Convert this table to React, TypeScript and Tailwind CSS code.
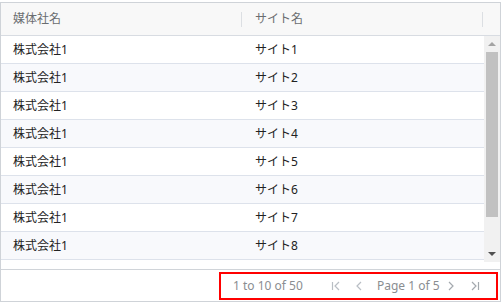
const rows = Array.from({ length: 10 }, (_, i) => ({
  company: '株式会社1',
  site: `サイト${i + 1}`,
}))

const font = "font-['Noto_Sans','Noto_Sans_CJK_JP',sans-serif]"

function PageIcon({ kind, muted }: { kind: 'first' | 'prev' | 'next' | 'last'; muted?: boolean }) {
  const stroke = muted ? '#b9bec4' : '#a4a9ae'
  return (
    <svg width="16" height="16" viewBox="0 0 16 16" fill="none" stroke={stroke} strokeWidth="1.2">
      {kind === 'first' && (
        <>
          <path d="M4.5 4v8" />
          <path d="M11 4l-4 4 4 4" />
        </>
      )}
      {kind === 'prev' && <path d="M10 4l-4 4 4 4" />}
      {kind === 'next' && <path d="M6 4l4 4-4 4" />}
      {kind === 'last' && (
        <>
          <path d="M5 4l4 4-4 4" />
          <path d="M11.5 4v8" />
        </>
      )}
    </svg>
  )
}

function Scrollbar() {
  return (
    <div className="flex w-[16px] flex-col bg-[#f1f1f1]">
      <div className="flex h-[16px] items-center justify-center">
        <div className="h-0 w-0 border-x-[4px] border-b-[4px] border-x-transparent border-b-[#a3a3a3]" />
      </div>
      <div className="mx-[2px] h-[165px] bg-[#c1c1c1]" />
      <div className="flex-1" />
      <div className="flex h-[16px] items-center justify-center">
        <div className="h-0 w-0 border-x-[4px] border-t-[4px] border-x-transparent border-t-[#505050]" />
      </div>
    </div>
  )
}

export default function App() {
  return (
    <div className={`bg-white pt-[2px] ${font}`}>
      <div className="flex h-[300px] w-[501px] flex-col border border-[#cfd3d8] bg-white">
        <div className="flex h-[33px] shrink-0 border-b border-[#d8dce2] bg-[#f8f8f8] text-[12px] text-[#6a6d70]">
          <div className="flex w-[241px] items-center">
            <span className="flex-1 pl-[12px]">媒体社名</span>
            <div className="h-[15px] w-px bg-[#dcdfe3]" />
          </div>
          <div className="flex w-[241px] items-center">
            <span className="flex-1 pl-[13px]">サイト名</span>
            <div className="h-[15px] w-px bg-[#dcdfe3]" />
          </div>
        </div>

        <div className="flex h-[226px] shrink-0">
          <div className="flex-1 overflow-hidden text-[12px] text-[#222]">
            {rows.map((r, i) => (
              <div
                key={r.site}
                className={`flex h-[28px] items-center border-b border-[#dde2eb] ${i % 2 ? 'bg-[#f8f9fc]' : 'bg-white'}`}
              >
                <span className="w-[241px] pl-[12px]">{r.company}</span>
                <span className="pl-[13px]">{r.site}</span>
              </div>
            ))}
          </div>
          <Scrollbar />
        </div>

        <div className="h-[7px] shrink-0" />

        <div className="flex flex-1 items-start justify-end border-t border-[#d0d4d9] pt-[2px] pr-[2px] text-[12px] leading-[16px] text-[#8a8d91]">
          <div className="flex h-[28px] w-[279px] items-center whitespace-nowrap border-2 border-[#ff0000] pl-[12px]">
            <span className="w-[95px] shrink-0">1 to 10 of 50</span>
            <PageIcon kind="first" muted />
            <span className="ml-[7px] flex">
              <PageIcon kind="prev" muted />
            </span>
            <span className="ml-[10px] w-[61px] shrink-0">Page 1 of 5</span>
            <span className="ml-[5px] flex">
              <PageIcon kind="next" />
            </span>
            <span className="ml-[8px] flex">
              <PageIcon kind="last" />
            </span>
          </div>
        </div>
      </div>
    </div>
  )
}
